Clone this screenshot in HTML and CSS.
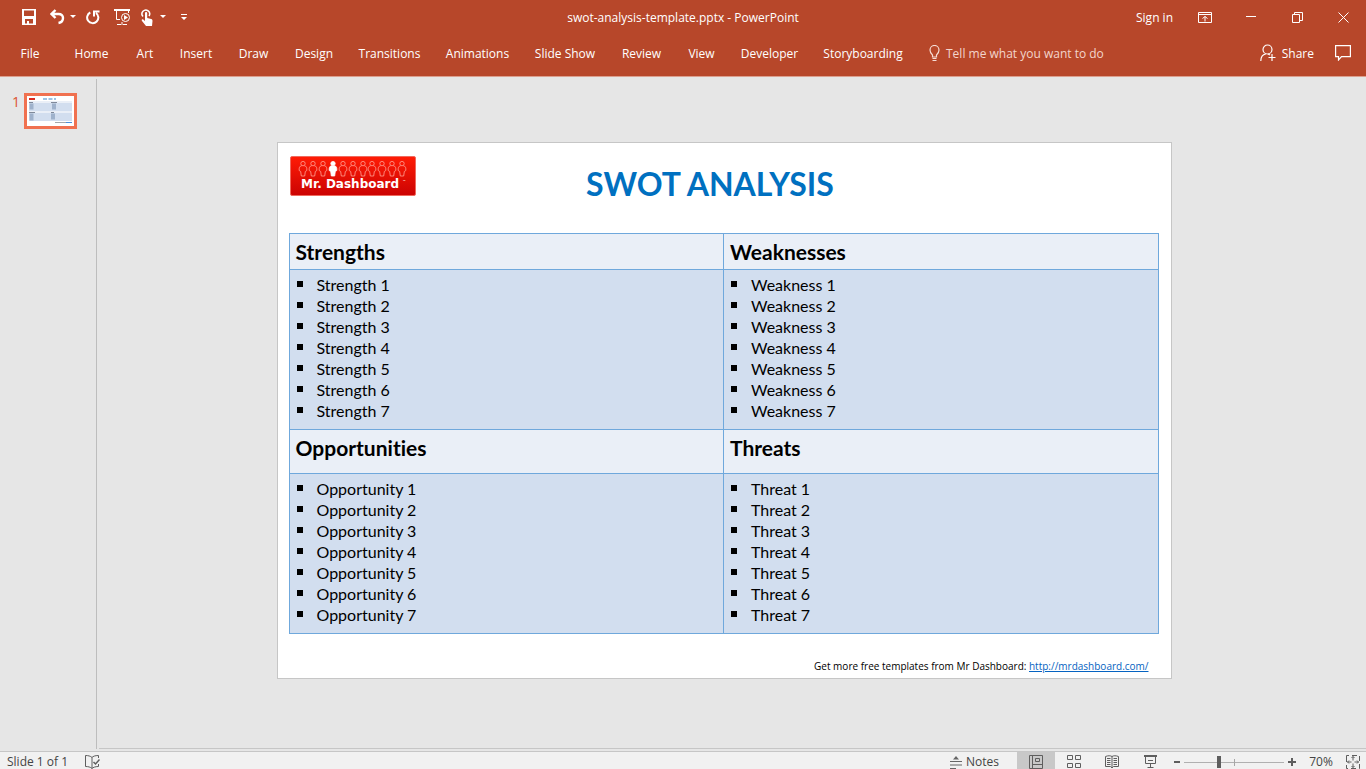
FILE: index.html
```html
<!DOCTYPE html>
<html lang="en">
<head>
<meta charset="utf-8">
<title>swot-analysis-template.pptx - PowerPoint</title>
<link rel="stylesheet" href="styles.css">
</head>
<body>
<svg class="defs" width="0" height="0" aria-hidden="true">
  <defs>
    <g id="person"><circle cx="4" cy="2.600" r="2.200"/><path d="M2.600 4.800C.4 5 0 7 .2 9.500L1.700 10.500 2.300 15h3.400l.6-4.500 1.500-1C8 7 7.600 5 5.400 4.800"/></g>
    <linearGradient id="red" x1="0" y1="0" x2="0" y2="1"><stop offset="0" stop-color="#ff1c05"/><stop offset="1" stop-color="#cb0303"/></linearGradient>
  </defs>
</svg>
<div class="app">
  <header class="ribbon">
    <div class="titlebar">
      <div class="quick">
        <button class="tool save" aria-label="Save"><svg width="14" height="16" viewBox="0 0 14 16"><path fill="#fff" fill-rule="evenodd" d="M0 0h14v16H0zM2 1.500v5.500h10V1.500zM3 10v4.500h2V12h2v2.500h4V10z"/></svg></button>
        <button class="tool undo" aria-label="Undo"><svg width="16" height="16" viewBox="0 0 16 16" fill="none" stroke="#fff" stroke-width="2.400"><path d="M5.500 1 1.500 5l4 4M2 5h6.500c3 0 4.500 1.700 4.500 4s-1.700 4.500-4.500 5"/></svg></button>
        <button class="tool caret" aria-label="Undo history"><svg width="6" height="4"><path fill="#fff" d="M0 0h6L3 3z"/></svg></button>
        <button class="tool redo" aria-label="Repeat"><svg width="14" height="15" viewBox="0 0 14 15" fill="none" stroke="#fff" stroke-width="2"><path d="M4.300 2.500A5.600 5.600 0 1 0 10 3M8 6.500V1.500h5.500"/></svg></button>
        <button class="tool show" aria-label="Start from beginning"><svg width="17" height="17" viewBox="0 0 17 17" fill="none" stroke="#fff"><path stroke-width="2" d="M0 1h16"/><path d="M2.500 2v8.500H6M14.500 2v2M8 13v3M3 15.500h4M9 15.500h4"/><circle cx="11.500" cy="8.500" r="4"/><path fill="#fff" stroke="none" d="M10 6v5l4-2.500z"/></svg></button>
        <button class="tool touch" aria-label="Touch mode"><svg width="12" height="17" viewBox="0 0 12 17"><path fill="none" stroke="#fff" stroke-width="1.500" d="M2 7.500A3.800 3.800 0 1 1 8 7"/><path fill="#fff" d="M4 4c0-1.500 2.200-1.500 2.200 0v5l4 1c1 .3 1.300 1 1.300 2l-.5 5H5L1 12c-1-1.500.5-2.300 1.500-1.300L4 12z"/></svg></button>
        <button class="tool caret" aria-label="Touch options"><svg width="6" height="4"><path fill="#fff" d="M0 0h6L3 3z"/></svg></button>
        <button class="tool more" aria-label="Customize toolbar"><svg width="6" height="6"><path fill="#fff" d="M0 0h6v1H0zM0 3h6L3 6z"/></svg></button>
      </div>
      <h1 class="doc">swot-analysis-template.pptx - PowerPoint</h1>
      <div class="window">
        <button class="signin">Sign in</button>
        <button class="win" aria-label="Ribbon display options"><svg width="14" height="11" viewBox="0 0 14 11" fill="none" stroke="#fff"><path d="M.5.5h13v10H.5zM0 2.500h14M7 9.500V4.500M4.500 6.500 7 4.500l2.500 2"/></svg></button>
        <button class="win" aria-label="Minimize"><svg width="10" height="2"><path fill="#fff" d="M0 0h10v1H0z"/></svg></button>
        <button class="win" aria-label="Restore"><svg width="11" height="11" fill="none" stroke="#fff"><path d="M.5 2.500h7v8h-7zM2.500 2.500v-2h8v8h-3"/></svg></button>
        <button class="win" aria-label="Close"><svg width="11" height="11" fill="none" stroke="#fff"><path d="m.5.5 10 10m0-10-10 10"/></svg></button>
      </div>
    </div>
    <nav class="menu">
      <div class="tabs">
        <button>File</button><button>Home</button><button>Art</button><button>Insert</button><button>Draw</button><button>Design</button><button>Transitions</button><button>Animations</button><button>Slide Show</button><button>Review</button><button>View</button><button>Developer</button><button>Storyboarding</button>
      </div>
      <button class="tell"><svg width="11" height="17" viewBox="0 0 11 17" fill="none" stroke="#f6ddd6"><path stroke-width="1.200" d="M3.500 12V10C1.800 8.500 1 7 1 5a4.500 4.500 0 0 1 9 0c0 2-.8 3.500-2.500 5v2z"/><path d="M3.500 13.500h4M3.500 15.500h4"/></svg>Tell me what you want to do</button>
      <button class="share"><svg width="16" height="18" viewBox="0 0 16 18" fill="none" stroke="#fff" stroke-width="1.200"><circle cx="7.500" cy="5.500" r="4.500"/><path d="M.8 17c0-4 2-6.500 5-7M8 10l2 1M12 10v7M8.500 13.500h7"/></svg>Share</button>
      <button class="comment" aria-label="Comments"><svg width="16" height="16" viewBox="0 0 16 16" fill="none" stroke="#fff" stroke-width="1.200"><path d="M.6.6h14.800v11H6.500L3.500 15v-3.400H.6z"/></svg></button>
    </nav>
  </header>

  <main class="main">
    <aside class="slides">
      <span class="num">1</span>
      <button class="thumb" aria-label="Slide 1"><svg width="47" height="30" viewBox="0 0 47 30"><path fill="#fff" d="M0 0h47v30H0z"/><path fill="#d92b20" d="M2 2h6v2H2z"/><path stroke="#7fb0dc" stroke-width="1.500" stroke-dasharray="4 1.500" d="M16 3h13"/><path fill="#d2deef" d="M2 5h43v20H2z"/><path fill="#eaeff7" d="M2 5h43v2H2zM2 15h43v2H2z"/><path stroke="#7f8999" d="M2 6.500h4M24 6.500h6M2 16.500h6M24 16.500h3"/><path stroke="#9fb2cc" stroke-width="4" d="M4.500 7.500v6M27 7.500v6M4.500 17.500v7M26 17.500v6"/><path stroke="#a3a8ad" d="M28 26.500h11"/><path stroke="#4a90dc" d="M39 26.500h6"/></svg></button>
    </aside>
    <section class="workspace">
      <article class="slide">
        <div class="head">
          <svg class="logo" width="126" height="40" viewBox="0 0 126 40" role="img" aria-label="Mr. Dashboard">
            <rect x=".5" y=".5" width="125" height="39" rx="1.500" fill="url(#red)" stroke="#f06a5e"/>
            <g fill="none" stroke="#ffa295" stroke-width=".8">
              <use href="#person" x="9" y="5"/><use href="#person" x="19" y="5"/><use href="#person" x="29" y="5"/>
              <use href="#person" x="39" y="5" fill="#fff" stroke="#fff"/>
              <use href="#person" x="49" y="5"/><use href="#person" x="59" y="5"/><use href="#person" x="69" y="5"/><use href="#person" x="78" y="5"/><use href="#person" x="88" y="5"/><use href="#person" x="98" y="5"/><use href="#person" x="108" y="5"/>
            </g>
            <text class="brand" x="11" y="32">Mr. Dashboard</text><text class="tm" x="113" y="27">™</text>
          </svg>
          <h2 class="title">SWOT ANALYSIS</h2>
        </div>
        <table class="swot">
          <tr><th>Strengths</th><th>Weaknesses</th></tr>
          <tr>
            <td><ul><li>Strength 1</li><li>Strength 2</li><li>Strength 3</li><li>Strength 4</li><li>Strength 5</li><li>Strength 6</li><li>Strength 7</li></ul></td>
            <td><ul><li>Weakness 1</li><li>Weakness 2</li><li>Weakness 3</li><li>Weakness 4</li><li>Weakness 5</li><li>Weakness 6</li><li>Weakness 7</li></ul></td>
          </tr>
          <tr class="tall"><th>Opportunities</th><th>Threats</th></tr>
          <tr>
            <td><ul><li>Opportunity 1</li><li>Opportunity 2</li><li>Opportunity 3</li><li>Opportunity 4</li><li>Opportunity 5</li><li>Opportunity 6</li><li>Opportunity 7</li></ul></td>
            <td><ul><li>Threat 1</li><li>Threat 2</li><li>Threat 3</li><li>Threat 4</li><li>Threat 5</li><li>Threat 6</li><li>Threat 7</li></ul></td>
          </tr>
        </table>
        <p class="more-info">Get more free templates from Mr Dashboard: <a href="http://mrdashboard.com/">http://mrdashboard.com/</a></p>
      </article>
    </section>
  </main>

  <footer class="status">
    <span class="count">Slide 1 of 1</span>
    <button class="spell" aria-label="Spelling"><svg width="15" height="14" viewBox="0 0 15 14" fill="none" stroke="#5e5e5e"><path d="M7 2.500C5.500 1 3 .5.500.5v11c2.500 0 5 .5 6.500 2zM7 2.500C8 1.300 10 .5 13.500.5V3M7 13.500c1-1 3-2 6.500-2V9"/><path stroke-width="1.500" d="m8.500 7 2 2L14.500 4.500"/></svg></button>
    <button class="notes"><svg width="12" height="13" viewBox="0 0 12 13" fill="#666"><path d="M3 3.500 6 0l3 3.500zM0 5h12v1H0zM0 8.500h12v1H0zM0 12h6v1H0z"/></svg>Notes</button>
    <button class="view on" aria-label="Normal"><svg width="14" height="14" viewBox="0 0 14 14" fill="none" stroke="#5e5e5e"><path d="M.5.5h13v13H.5zM3.500.5v13M3.500 9.500h10M6.500 3.500h4v3h-4z"/></svg></button>
    <button class="view" aria-label="Slide sorter"><svg width="14" height="14" viewBox="0 0 14 14" fill="none" stroke="#5e5e5e"><path d="M.5.5h5v4h-5zM8.500.5h5v4h-5zM.5 8.500h5v4h-5zM8.500 8.500h5v4h-5z"/></svg></button>
    <button class="view" aria-label="Reading view"><svg width="14" height="14" viewBox="0 0 14 14" fill="none" stroke="#5e5e5e"><path d="M.5 1.500c2.500-1 5-1 6.500 0 1.500-1 4-1 6.500 0v10h-5L7 13l-1.500-1.500h-5zM7 1.500V13M2 3.500h3.500M2 5.500h3.500M2 7.500h3.500M2 9.500h3.500M8.500 3.500H12M8.500 5.500H12M8.500 7.500H12M8.500 9.500H12"/></svg></button>
    <button class="view" aria-label="Slide show"><svg width="13" height="14" viewBox="0 0 13 14" fill="none" stroke="#5e5e5e"><path stroke-width="2" d="M0 1h13"/><path d="M1.500 2v6.500h10V2M4 5.500h5M6.500 8.500v4M3.500 12.500h6"/></svg></button>
    <div class="zoom">
      <button class="step" aria-label="Zoom out"><svg width="6" height="10"><path fill="#5e5e5e" d="M0 4h6v2H0z"/></svg></button>
      <input class="range" type="range" min="0" max="100" value="34" aria-label="Zoom">
      <button class="step" aria-label="Zoom in"><svg width="8" height="8"><path fill="#5e5e5e" d="M0 3h3V0h2v3h3v2H5v3H3V5H0z"/></svg></button>
    </div>
    <button class="pct">70%</button>
    <button class="fit" aria-label="Fit slide to window"><svg width="14" height="14" viewBox="0 0 14 14" fill="none" stroke="#5e5e5e"><path stroke-dasharray="5 3" d="M.5 3V.5h13v13H.5z"/><path d="M7 1.500v4M5.500 3 7 1.500 8.500 3M7 12.500v-4M5.500 11 7 12.500 8.500 11M1.500 7h4M3 5.500 1.500 7 3 8.500M12.500 7h-4M11 5.500 12.500 7 11 8.500"/></svg></button>
  </footer>
</div>
</body>
</html>
```

FILE: styles.css
```css
* { box-sizing: border-box; }
body { margin: 0; font-family: "Open Sans", "Noto Sans", sans-serif; font-size: 12px; }
button { font: inherit; color: inherit; background: none; border: 0; padding: 0; margin: 0; white-space: nowrap; }
svg { display: block; flex: none; }
.defs { position: absolute; }
.app { height: 100vh; display: flex; flex-direction: column; overflow: hidden; background: #e6e6e6; }

.ribbon { flex: none; background: #b7472a; color: #fff; border-bottom: 1px solid #dc9f8e; }
.titlebar { height: 34px; display: grid; grid-template-columns: 1fr auto 1fr; align-items: center; }
.quick { display: flex; align-items: center; padding-left: 22px; }
.tool { display: grid; place-items: center; height: 24px; }
.save { margin-right: 14px; }
.undo { margin-right: 4px; }
.redo { margin: 0 14px 0 10px; }
.show { margin-right: 10px; }
.touch { margin-right: 7px; }
.more { margin-left: 15px; }
.doc { margin: 0; font-size: 12px; font-weight: 400; }
.window { display: flex; align-items: center; justify-content: flex-end; height: 100%; }
.signin { margin-right: 9px; }
.win { width: 46px; height: 32px; display: grid; place-items: center; }
.menu { height: 42px; display: flex; align-items: center; padding-bottom: 4px; }
.tabs { display: grid; grid-template-columns: 60px 63px 44px 58px 57px 64px 87px 89px 86px 67px 53px 83px 104px; }
.tabs button { height: 30px; text-align: center; }
.tell { display: flex; align-items: center; gap: 6px; margin-left: 14px; color: #f3d5cc; }
.share { display: flex; align-items: center; gap: 6px; margin-left: auto; }
.comment { margin: 0 15px 0 21px; }

.main { flex: 1; min-height: 0; display: flex; padding: 2px 0; }
.slides { width: 97px; flex: none; display: flex; align-items: flex-start; gap: 5px; padding: 14px 0 0 12px; border-right: 1px solid #bdbdbd; }
.num { width: 7px; color: #dc5330; font-size: 14px; line-height: 18px; }
.thumb { border: 3px solid #f07150; }
.workspace { flex: 1; min-width: 0; margin-left: 2px; padding: 0 17px 6px 0; border-bottom: 1px solid #c6c6c6; display: flex; align-items: center; justify-content: center; }

.slide { width: 71.6%; padding: 13px 12px 3px 11px; background: #fff; border: 1px solid #c6c6c6; font-family: Lato, Carlito, sans-serif; font-variant-ligatures: none; color: #000; }
.head { display: grid; grid-template-columns: 1fr auto 1fr; align-items: start; height: 77px; padding: 0 28px 0 1px; }
.brand { font: bold 12px "DejaVu Sans", sans-serif; fill: #fff; }
.tm { font: 4px Inter, sans-serif; fill: #fff; }
.title { margin: 7px 0 0; font-size: 32px; line-height: 42px; font-weight: 700; color: #0070c0; }
.swot { width: 100%; table-layout: fixed; border-collapse: collapse; }
.swot th, .swot td { border: 1px solid #6fa8dc; padding: 0 6px; text-align: left; vertical-align: top; }
.swot th { height: 36px; background: #eaeff7; font-size: 21px; line-height: 35px; }
.swot .tall th { height: 44px; }
.swot td { height: 160px; background: #d2deef; padding-top: 4px; }
.swot ul { display: grid; grid-auto-rows: 1fr; height: 148px; margin: 0; padding: 0; list-style: none; }
.swot li { display: flex; align-items: center; gap: 14px; padding-left: 1px; font-size: 16px; line-height: 20px; }
.swot li::before { content: ""; width: 6px; height: 6px; margin-bottom: 2px; background: #000; }
.more-info { margin: 24px 10px 0 0; text-align: right; font-family: "Open Sans", sans-serif; font-size: 10px; line-height: 17px; }
.more-info a { color: #0563c1; }

.status { flex: none; height: 18px; display: flex; border-top: 1px solid #c6c6c6; background: #f1f1f1; color: #444; line-height: 14px; }
.status > * { height: 20px; display: flex; align-items: center; flex: none; }
.count { padding-left: 7px; }
.spell { margin-left: 17px; }
.notes { gap: 4px; margin: 0 18px 0 auto; }
.view { width: 38px; justify-content: center; }
.on { background: #c8c8c8; }
.zoom { gap: 4px; margin-left: 5px; }
.range { appearance: none; width: 100px; height: 12px; margin: 0; background: linear-gradient(#a6a6a6, #a6a6a6) center / 1px 7px no-repeat, linear-gradient(#b0b0b0, #b0b0b0) center / 100% 1px no-repeat; }
.range::-webkit-slider-thumb { appearance: none; width: 4px; height: 12px; background: #5e5e5e; }
.pct { width: 50px; justify-content: center; }
.fit { margin-right: 6px; }
```
